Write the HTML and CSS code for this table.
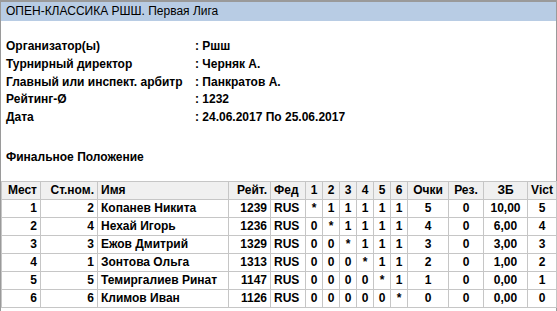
FILE: index.html
```html
<!DOCTYPE html>
<html lang="ru">
<head>
<meta charset="utf-8">
<title>ОПЕН-КЛАССИКА РШШ. Первая Лига</title>
<link rel="stylesheet" href="styles.css">
</head>
<body>
<div class="page">
  <div class="title">ОПЕН-КЛАССИКА РШШ. Первая Лига</div>
  <div class="info">
    <div class="row"><span class="label">Организатор(ы)</span><span class="value">: Ршш</span></div>
    <div class="row"><span class="label">Турнирный директор</span><span class="value">: Черняк А.</span></div>
    <div class="row"><span class="label">Главный или инспект. арбитр</span><span class="value">: Панкратов А.</span></div>
    <div class="row"><span class="label">Рейтинг-Ø</span><span class="value">: 1232</span></div>
    <div class="row"><span class="label">Дата</span><span class="value">: 24.06.2017 По 25.06.2017</span></div>
  </div>
  <div class="section">Финальное Положение</div>
  <table class="standings">
    <colgroup>
      <col class="c-place"><col class="c-sn"><col class="c-name"><col class="c-rt"><col class="c-fed">
      <col class="c-r"><col class="c-r"><col class="c-r"><col class="c-r"><col class="c-r"><col class="c-r">
      <col class="c-pts"><col class="c-res"><col class="c-tb"><col class="c-vict">
    </colgroup>
    <thead>
      <tr>
        <th class="r">Мест</th><th class="r">Ст.ном.</th><th class="l">Имя</th><th class="r">Рейт.</th><th class="l">Фед</th>
        <th>1</th><th>2</th><th>3</th><th>4</th><th>5</th><th>6</th>
        <th>Очки</th><th>Рез.</th><th>ЗБ</th><th>Vict</th>
      </tr>
    </thead>
    <tbody>
      <tr><td class="r">1</td><td class="r">2</td><td class="l">Копанев Никита</td><td class="r">1239</td><td class="l">RUS</td><td>*</td><td>1</td><td>1</td><td>1</td><td>1</td><td>1</td><td>5</td><td>0</td><td>10,00</td><td>5</td></tr>
      <tr><td class="r">2</td><td class="r">4</td><td class="l">Нехай Игорь</td><td class="r">1236</td><td class="l">RUS</td><td>0</td><td>*</td><td>1</td><td>1</td><td>1</td><td>1</td><td>4</td><td>0</td><td>6,00</td><td>4</td></tr>
      <tr><td class="r">3</td><td class="r">3</td><td class="l">Ежов Дмитрий</td><td class="r">1329</td><td class="l">RUS</td><td>0</td><td>0</td><td>*</td><td>1</td><td>1</td><td>1</td><td>3</td><td>0</td><td>3,00</td><td>3</td></tr>
      <tr><td class="r">4</td><td class="r">1</td><td class="l">Зонтова Ольга</td><td class="r">1313</td><td class="l">RUS</td><td>0</td><td>0</td><td>0</td><td>*</td><td>1</td><td>1</td><td>2</td><td>0</td><td>1,00</td><td>2</td></tr>
      <tr><td class="r">5</td><td class="r">5</td><td class="l">Темиргалиев Ринат</td><td class="r">1147</td><td class="l">RUS</td><td>0</td><td>0</td><td>0</td><td>0</td><td>*</td><td>1</td><td>1</td><td>0</td><td>0,00</td><td>1</td></tr>
      <tr><td class="r">6</td><td class="r">6</td><td class="l">Климов Иван</td><td class="r">1126</td><td class="l">RUS</td><td>0</td><td>0</td><td>0</td><td>0</td><td>0</td><td>*</td><td>0</td><td>0</td><td>0,00</td><td>0</td></tr>
    </tbody>
  </table>
</div>
</body>
</html>
```

FILE: styles.css
```css
html, body {
  margin: 0;
  padding: 0;
  background: #ffffff;
}
body {
  font-family: "Liberation Sans", Arial, sans-serif;
  font-size: 12px;
  color: #000000;
}
.page {
  border-top: 2px solid #9a9a9a;
  border-left: 1px solid #9a9a9a;
  border-right: 1px solid #9a9a9a;
  height: 311px;
  box-sizing: border-box;
}
.title {
  background: #b8cce4;
  height: 19px;
  line-height: 19px;
  padding-left: 5px;
}
.info {
  padding: 17px 0 0 5px;
  font-weight: bold;
}
.row {
  display: flex;
  height: 17.8px;
  line-height: 17.8px;
}
.label {
  width: 189px;
}
.section {
  padding: 21px 0 0 5px;
  line-height: 18px;
  height: 18px;
  font-weight: bold;
}
.standings {
  margin-top: 15px;
  border-collapse: collapse;
  table-layout: fixed;
  width: 554px;
}
.standings tr {
  height: 18px;
}
.standings th, .standings td {
  border: 1px solid #c6c6c6;
  line-height: 15px;
  padding: 0 3px;
  font-weight: bold;
  text-align: center;
  white-space: nowrap;
  overflow: hidden;
}
.standings th {
  background: #f0f0f0;
}
.standings .r { text-align: right; }
.standings .l { text-align: left; }
.c-place { width: 39px; }
.c-sn { width: 57px; }
.c-name { width: 131px; }
.c-rt { width: 42px; }
.c-fed { width: 35px; }
.c-r { width: 17px; }
.c-pts { width: 41px; }
.c-res { width: 35px; }
.c-tb { width: 44px; }
.c-vict { width: 29px; }
```
